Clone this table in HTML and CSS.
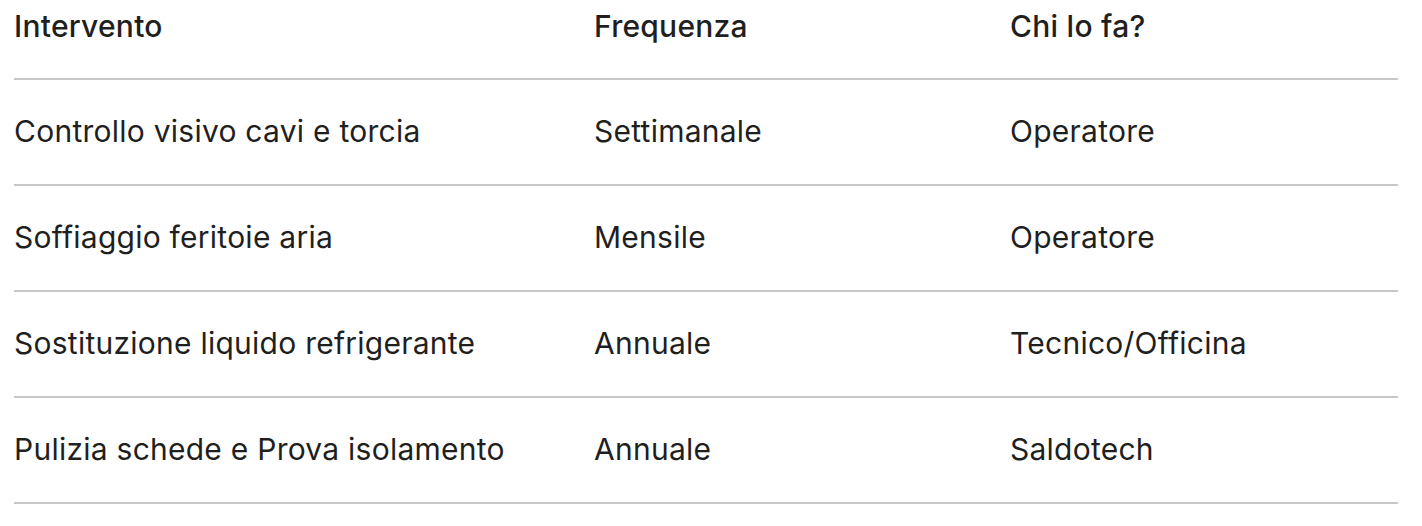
FILE: index.html
```html
<!DOCTYPE html>
<html lang="it">
<head>
<meta charset="utf-8">
<title>Manutenzione</title>
<link rel="stylesheet" href="styles.css">
</head>
<body>
<div class="wrap">
  <table class="maint">
    <colgroup>
      <col class="c1"><col class="c2"><col class="c3">
    </colgroup>
    <thead>
      <tr><th>Intervento</th><th>Frequenza</th><th>Chi lo fa?</th></tr>
    </thead>
    <tbody>
      <tr><td>Controllo visivo cavi e torcia</td><td>Settimanale</td><td>Operatore</td></tr>
      <tr><td>Soffiaggio feritoie aria</td><td>Mensile</td><td>Operatore</td></tr>
      <tr><td>Sostituzione liquido refrigerante</td><td>Annuale</td><td>Tecnico/Officina</td></tr>
      <tr><td>Pulizia schede e Prova isolamento</td><td>Annuale</td><td>Saldotech</td></tr>
    </tbody>
  </table>
</div>
</body>
</html>
```
FILE: styles.css
```css
html, body {
  margin: 0;
  padding: 0;
  background: #ffffff;
}
body {
  font-family: Inter, Roboto, "Noto Sans", "Liberation Sans", sans-serif;
  color: #1f1f1f;
}
.wrap {
  padding-left: 14px;
}
.maint {
  width: 1384px;
  border-collapse: collapse;
  table-layout: fixed;
  font-size: 30px;
  line-height: 46px;
  letter-spacing: 0.25px;
}
.c1 { width: 580px; }
.c2 { width: 416px; }
.c3 { width: 388px; }
.maint th {
  text-align: left;
  font-weight: 500;
  padding: 3px 0 29px 0;
  border-bottom: 2px solid #c7c7c7;
  vertical-align: top;
}
.maint td {
  padding: 28px 0 30px 0;
  border-bottom: 2px solid #c7c7c7;
  vertical-align: middle;
  font-weight: 400;
}
```
